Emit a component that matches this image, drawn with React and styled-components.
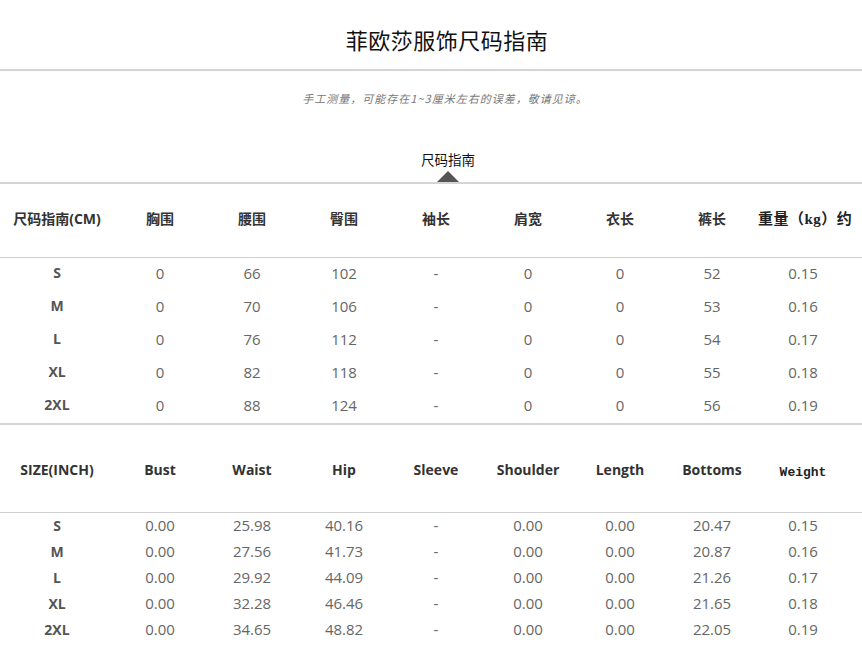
import React from 'react';
import styled, {createGlobalStyle} from 'styled-components';

const GlobalStyle = createGlobalStyle`
    html, body {
        margin: 0;
        padding: 0;
        background: #fff;
    }
    body {
        font-family: "Open Sans", "Noto Sans CJK SC", sans-serif;
        color: #333;
    }
`;

const cmRows = [
    ['S', '0', '66', '102', '-', '0', '0', '52', '0.15'],
    ['M', '0', '70', '106', '-', '0', '0', '53', '0.16'],
    ['L', '0', '76', '112', '-', '0', '0', '54', '0.17'],
    ['XL', '0', '82', '118', '-', '0', '0', '55', '0.18'],
    ['2XL', '0', '88', '124', '-', '0', '0', '56', '0.19'],
];

const inchRows = [
    ['S', '0.00', '25.98', '40.16', '-', '0.00', '0.00', '20.47', '0.15'],
    ['M', '0.00', '27.56', '41.73', '-', '0.00', '0.00', '20.87', '0.16'],
    ['L', '0.00', '29.92', '44.09', '-', '0.00', '0.00', '21.26', '0.17'],
    ['XL', '0.00', '32.28', '46.46', '-', '0.00', '0.00', '21.65', '0.18'],
    ['2XL', '0.00', '34.65', '48.82', '-', '0.00', '0.00', '22.05', '0.19'],
];

const cmHead = ['尺码指南(CM)', '胸围', '腰围', '臀围', '袖长', '肩宽', '衣长', '裤长'];
const inchHead = ['SIZE(INCH)', 'Bust', 'Waist', 'Hip', 'Sleeve', 'Shoulder', 'Length', 'Bottoms'];

const Page = styled.div`
    width: 862px;
`;

const TitleBar = styled.div`
    height: 71px;
    display: flex;
    align-items: center;
    justify-content: center;
    padding-left: 32px;
    border-bottom: 2px solid #d4d4d4;
    box-sizing: border-box;
`;

const Title = styled.h1`
    margin: 8px 0 0;
    font-family: "Noto Sans CJK SC", sans-serif;
    font-weight: 400;
    font-size: 22px;
    letter-spacing: 0.5px;
    color: #111;
`;

const Note = styled.p`
    margin: 19px 0 0;
    text-align: center;
    padding-left: 28px;
    font-family: "Noto Sans CJK SC", sans-serif;
    font-style: italic;
    font-size: 11px;
    color: #777;
    letter-spacing: 1px;
`;

const TabBar = styled.div`
    margin-top: 44px;
    display: flex;
    flex-direction: column;
    align-items: center;
    padding-left: 34px;
`;

const TabLabel = styled.span`
    font-family: "Noto Sans CJK SC", sans-serif;
    font-size: 13.5px;
    line-height: 18px;
    color: #111;
`;

const Arrow = styled.span`
    margin-top: 3px;
    width: 0;
    height: 0;
    border-left: 11px solid transparent;
    border-right: 11px solid transparent;
    border-bottom: 11px solid #555;
`;

const Table = styled.div`
    border-top: 2px solid #d4d4d4;
`;

const HeadRow = styled.div`
    display: grid;
    grid-template-columns: 114px repeat(7, 92px) 90px;
    align-items: center;
    height: ${p => p.$h}px;
    padding-top: ${p => p.$drop}px;
    padding-bottom: ${p => p.$lift}px;
    box-sizing: border-box;
    border-bottom: 1px solid #d0d0d0;
`;

const BodyRow = styled.div`
    display: grid;
    grid-template-columns: 114px repeat(7, 92px) 90px;
    align-items: center;
    height: ${p => p.$h}px;
    padding-bottom: ${p => p.$lift}px;
    box-sizing: border-box;
`;

const HeadCell = styled.div`
    text-align: center;
    font-family: "Open Sans", "Noto Sans CJK SC", sans-serif;
    font-weight: 700;
    font-size: 14px;
    color: #333;
    white-space: nowrap;
`;

const SerifHead = styled(HeadCell)`
    font-family: "Liberation Serif", "Noto Sans CJK SC", serif;
    font-size: 15px;
    letter-spacing: 0.5px;
    color: #222;
`;

const MonoHead = styled(HeadCell)`
    font-family: "Liberation Mono", monospace;
    font-size: 13px;
    padding-top: 6px;
    color: #222;
`;

const Cell = styled.div`
    text-align: center;
    font-family: "Open Sans", sans-serif;
    font-size: 15px;
    color: #666;
`;

const SizeCell = styled(Cell)`
    font-weight: 700;
    font-size: 14px;
    color: #555;
`;

const SizeTable = ({head, last, rows, headH, headDrop, headLift, rowH, rowLift, mono}) => (
    <Table>
        <HeadRow $h={headH} $drop={headDrop} $lift={headLift}>
            {head.map(h => (
                <HeadCell key={h}>{h}</HeadCell>
            ))}
            {mono ? <MonoHead>{last}</MonoHead> : <SerifHead>{last}</SerifHead>}
        </HeadRow>
        {rows.map(r => (
            <BodyRow key={r[0]} $h={rowH} $lift={rowLift}>
                {r.map((v, i) => i === 0
                    ? <SizeCell key={i}>{v}</SizeCell>
                    : <Cell key={i}>{v}</Cell>)}
            </BodyRow>
        ))}
    </Table>
);

export default function App() {
    return (
        <Page>
            <GlobalStyle/>
            <TitleBar>
                <Title>菲欧莎服饰尺码指南</Title>
            </TitleBar>
            <Note>手工测量，可能存在1~3厘米左右的误差，敬请见谅。</Note>
            <TabBar>
                <TabLabel>尺码指南</TabLabel>
                <Arrow/>
            </TabBar>
            <SizeTable head={cmHead} last="重量（kg）约" rows={cmRows}
                headH={74} headDrop={0} headLift={6} rowH={33} rowLift={4}/>
            <SizeTable head={inchHead} last="Weight" rows={inchRows}
                headH={88} headDrop={2} headLift={0} rowH={26} rowLift={2} mono/>
        </Page>
    );
}
